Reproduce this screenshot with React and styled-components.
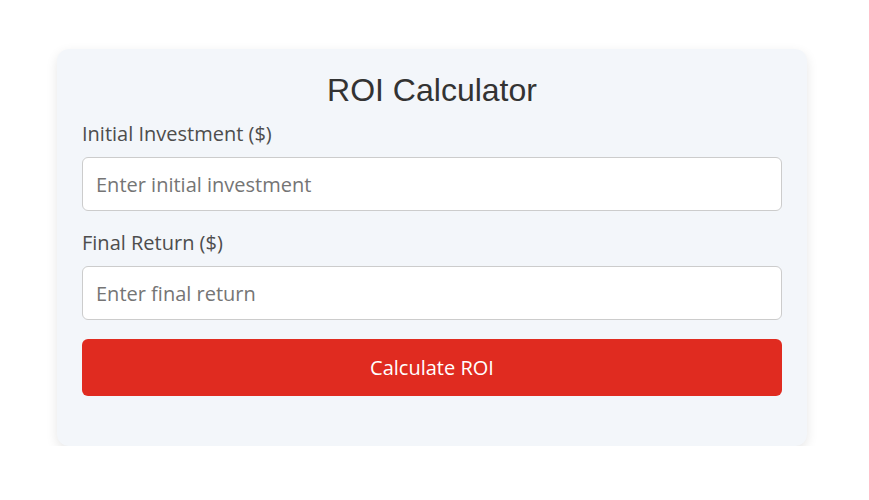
import React from "react";
import styled, { createGlobalStyle } from "styled-components";

const GlobalStyle = createGlobalStyle`
  html, body { margin: 0; padding: 0; background: #ffffff; }
  body { font-family: "Open Sans", "Noto Sans", sans-serif; }
  * { box-sizing: border-box; }
`;

const Page = styled.div`
  padding: 49px 0 0 57px;
`;

const Card = styled.div`
  width: 750px;
  background: #f3f6fa;
  border-radius: 12px;
  box-shadow: 0 4px 12px rgba(0, 0, 0, 0.1);
  padding: 23px 25px 50px;
  display: flex;
  flex-direction: column;
`;

const Title = styled.h1`
  margin: 0 0 11px;
  font-family: "Liberation Sans", Arial, sans-serif;
  font-size: 32px;
  font-weight: 400;
  color: #333333;
  text-align: center;
  line-height: normal;
`;

const Field = styled.div`
  display: flex;
  flex-direction: column;
  gap: 10px;
  margin-bottom: ${(p) => p.$mb}px;
`;

const Label = styled.label`
  font-size: 20px;
  line-height: normal;
  color: #4d4d4d;
`;

const Input = styled.input`
  width: 100%;
  height: 54px;
  padding: 0 13px;
  font-family: "Open Sans", "Noto Sans", sans-serif;
  font-size: 20px;
  color: #333;
  background: #ffffff;
  border: 1px solid #cccccc;
  border-radius: 6px;
  outline: none;
  &::placeholder { color: #757575; }
`;

const Button = styled.button`
  width: 100%;
  height: 57px;
  border: none;
  border-radius: 6px;
  background: #e02b20;
  color: #ffffff;
  font-family: "Open Sans", "Noto Sans", sans-serif;
  font-size: 20px;
  cursor: pointer;
`;

export default function App() {
  return (
    <>
      <GlobalStyle />
      <Page>
        <Card>
          <Title>ROI Calculator</Title>
          <Field $mb={18}>
            <Label htmlFor="inv">Initial Investment ($)</Label>
            <Input id="inv" type="number" placeholder="Enter initial investment" />
          </Field>
          <Field $mb={19}>
            <Label htmlFor="ret">Final Return ($)</Label>
            <Input id="ret" type="number" placeholder="Enter final return" />
          </Field>
          <Button>Calculate ROI</Button>
        </Card>
      </Page>
    </>
  );
}
